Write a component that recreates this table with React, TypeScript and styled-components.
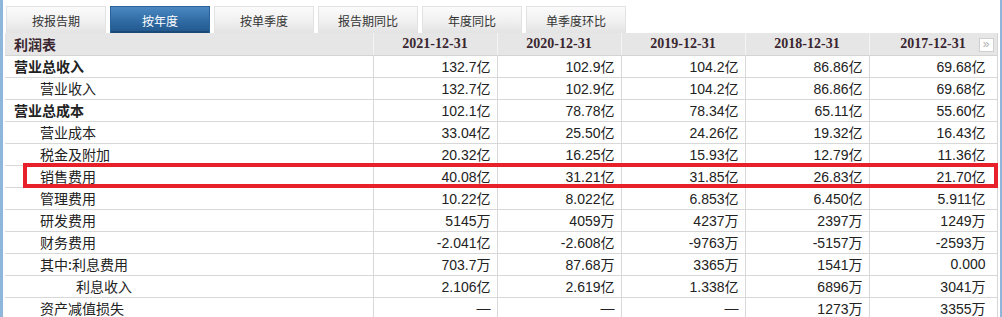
import React from "react"
import styled, { createGlobalStyle } from "styled-components"

const GlobalStyle = createGlobalStyle`
  html, body {
    margin: 0;
    padding: 0;
    background: #fff;
  }
  body {
    font-family: "Noto Sans CJK SC", "Liberation Sans", sans-serif;
    color: #333;
  }
`

type Row = {
  label: string
  level: 0 | 1 | 2
  bold?: boolean
  values: string[]
}

const tabs = ["按报告期", "按年度", "按单季度", "报告期同比", "年度同比", "单季度环比"]
const years = ["2021-12-31", "2020-12-31", "2019-12-31", "2018-12-31", "2017-12-31"]
const colWidths = [368, 124, 124, 124, 124, 128]

const rows: Row[] = [
  { label: "营业总收入", level: 0, bold: true, values: ["132.7亿", "102.9亿", "104.2亿", "86.86亿", "69.68亿"] },
  { label: "营业收入", level: 1, values: ["132.7亿", "102.9亿", "104.2亿", "86.86亿", "69.68亿"] },
  { label: "营业总成本", level: 0, bold: true, values: ["102.1亿", "78.78亿", "78.34亿", "65.11亿", "55.60亿"] },
  { label: "营业成本", level: 1, values: ["33.04亿", "25.50亿", "24.26亿", "19.32亿", "16.43亿"] },
  { label: "税金及附加", level: 1, values: ["20.32亿", "16.25亿", "15.93亿", "12.79亿", "11.36亿"] },
  { label: "销售费用", level: 1, values: ["40.08亿", "31.21亿", "31.85亿", "26.83亿", "21.70亿"] },
  { label: "管理费用", level: 1, values: ["10.22亿", "8.022亿", "6.853亿", "6.450亿", "5.911亿"] },
  { label: "研发费用", level: 1, values: ["5145万", "4059万", "4237万", "2397万", "1249万"] },
  { label: "财务费用", level: 1, values: ["-2.041亿", "-2.608亿", "-9763万", "-5157万", "-2593万"] },
  { label: "其中:利息费用", level: 1, values: ["703.7万", "87.68万", "3365万", "1541万", "0.000"] },
  { label: "利息收入", level: 2, values: ["2.106亿", "2.619亿", "1.338亿", "6896万", "3041万"] },
  { label: "资产减值损失", level: 1, values: ["—", "—", "—", "1273万", "3355万"] },
]

const indent = [9, 35, 71]

export default function App(): JSX.Element {
  return (
    <>
      <GlobalStyle />
      <Page>
        <TabBar>
          {tabs.map((t) => (
            <Tab key={t} $active={t === "按年度"}>{t}</Tab>
          ))}
        </TabBar>
        <Table>
          <colgroup>
            {colWidths.map((w, i) => (
              <Col key={i} $w={w} />
            ))}
          </colgroup>
          <thead>
            <tr>
              <HeadLabel>利润表</HeadLabel>
              {years.map((y, i) => (
                <HeadDate key={y}>
                  {y}
                  {i === years.length - 1 && <MoreButton>»</MoreButton>}
                </HeadDate>
              ))}
            </tr>
          </thead>
          <tbody>
            {rows.map((r) => (
              <tr key={r.label}>
                <Label $pad={indent[r.level]} $bold={r.bold}>{r.label}</Label>
                {r.values.map((v, i) => (
                  <Value key={i} $last={i === r.values.length - 1}>{v}</Value>
                ))}
              </tr>
            ))}
          </tbody>
        </Table>
        <Highlight />
      </Page>
    </>
  )
}

const Page = styled.div`
  position: relative;
  box-sizing: border-box;
  width: 1002px;
  height: 317px;
  overflow: hidden;
  border-left: 3px solid #8eb5da;
  border-right: 2px solid #8eb5da;
  padding: 6px 3px 0 2px;
`

const TabBar = styled.div`
  display: flex;
  gap: 4px;
  margin-left: 1px;
  height: 27px;
`

const Tab = styled.div<{ $active?: boolean }>`
  box-sizing: border-box;
  width: 100px;
  height: 27px;
  display: flex;
  align-items: center;
  justify-content: center;
  font-size: 12px;
  border: 1px solid ${(p) => (p.$active ? "#2c6399" : "#e2e2e2")};
  border-bottom: none;
  color: ${(p) => (p.$active ? "#fff" : "#333")};
  background: ${(p) =>
    p.$active
      ? "linear-gradient(to bottom, #4b88c2 0%, #2f6aa3 55%, #21588c 100%)"
      : "linear-gradient(to bottom, #fbfbfb 0%, #f0f0f0 55%, #e3e3e3 100%)"};
  box-shadow: ${(p) => (p.$active ? "inset 0 -2px 0 #1a4a78" : "none")};
`

const Table = styled.table`
  width: 992px;
  table-layout: fixed;
  border-collapse: collapse;
  border-right: 1px solid #d6d6d6;
  font-size: 14px;
`

const Col = styled.col<{ $w: number }>`
  width: ${(p) => p.$w}px;
`

const HeadCell = styled.th`
  height: 22px;
  box-sizing: border-box;
  padding: 0;
  background: #e6e6e6;
  border-bottom: 1px solid #d4d4d4;
`

const HeadLabel = styled(HeadCell)`
  text-align: left;
  padding-left: 9px;
  font-weight: bold;
  color: #3a2630;
`

const HeadDate = styled(HeadCell)`
  position: relative;
  text-align: center;
  border-left: 1px solid #f4f4f4;
  font-family: "Liberation Serif", serif;
  font-weight: bold;
  color: #3a2630;
`

const MoreButton = styled.span`
  position: absolute;
  right: 3px;
  top: 5px;
  box-sizing: border-box;
  width: 15px;
  height: 14px;
  border: 1px solid #cfcfcf;
  background: #fff;
  color: #b0b0b0;
  font-family: "Liberation Sans", sans-serif;
  font-weight: normal;
  font-size: 12px;
  line-height: 11px;
  text-align: center;
`

const Label = styled.td<{ $pad: number; $bold?: boolean }>`
  height: 22px;
  box-sizing: border-box;
  padding: 0 0 0 ${(p) => p.$pad}px;
  border-bottom: 1px solid #d8d8d8;
  font-weight: ${(p) => (p.$bold ? "bold" : "normal")};
  color: #222;
  white-space: nowrap;
`

const Value = styled.td<{ $last?: boolean }>`
  height: 22px;
  box-sizing: border-box;
  padding: 0 ${(p) => (p.$last ? 11 : 6)}px 0 0;
  text-align: right;
  border-bottom: 1px solid #d8d8d8;
  border-left: 1px solid #d8d8d8;
  font-family: "Liberation Sans", "Noto Sans CJK SC", sans-serif;
  color: #222;
  white-space: nowrap;
`

const Highlight = styled.div`
  position: absolute;
  left: 20px;
  top: 163px;
  width: 975px;
  height: 25px;
  box-sizing: border-box;
  border: 4px solid #e8202a;
  pointer-events: none;
`
